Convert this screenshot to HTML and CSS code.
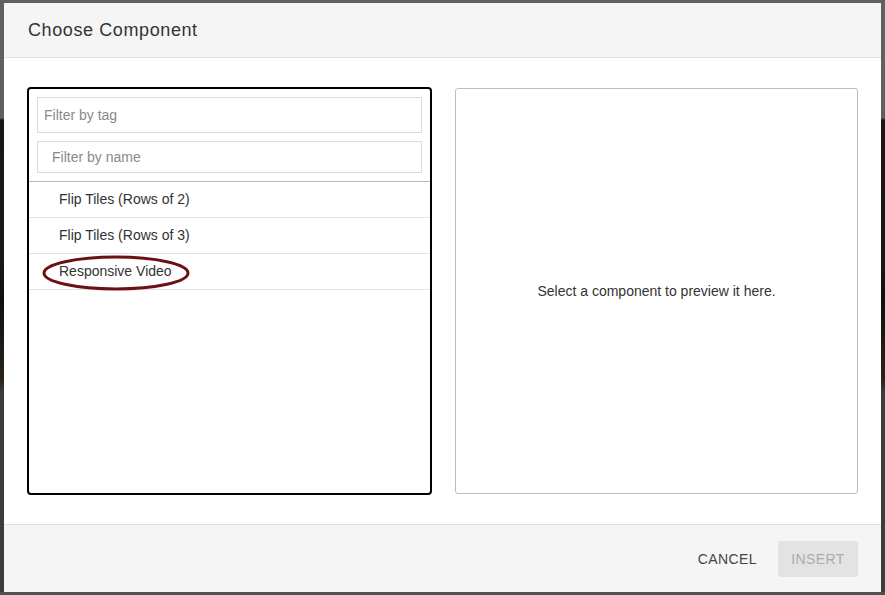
FILE: index.html
```html
<!DOCTYPE html>
<html>
<head>
<meta charset="utf-8">
<link rel="stylesheet" href="styles.css">
</head>
<body>
<div class="backdrop">
  <div class="dialog">
    <div class="dialog-header">
      <h1 class="dialog-title">Choose Component</h1>
    </div>
    <div class="dialog-body">
      <div class="panel panel-list">
        <input class="filter filter-tag" type="text" placeholder="Filter by tag">
        <input class="filter filter-name" type="text" placeholder="Filter by name">
        <ul class="component-list">
          <li class="component-item">Flip Tiles (Rows of 2)</li>
          <li class="component-item">Flip Tiles (Rows of 3)</li>
          <li class="component-item marked">Responsive Video
            <svg class="mark" width="150" height="38" viewBox="0 0 150 38"><ellipse cx="75" cy="19" rx="72" ry="16" fill="none" stroke="#6b1013" stroke-width="3"/></svg>
          </li>
        </ul>
      </div>
      <div class="panel panel-preview">
        <p class="preview-msg">Select a component to preview it here.</p>
      </div>
    </div>
    <div class="dialog-footer">
      <button class="btn btn-cancel">Cancel</button>
      <button class="btn btn-insert" disabled>Insert</button>
    </div>
  </div>
</div>
</body>
</html>
```
FILE: styles.css
```css
* { box-sizing: border-box; }
html, body {
  margin: 0;
  padding: 0;
  width: 885px;
  height: 595px;
  overflow: hidden;
}
body {
  font-family: "Liberation Sans", Arial, sans-serif;
  background: linear-gradient(to bottom,
    #606060 0, #606060 118px,
    #1c1517 120px, #18181c 260px, #0f100c 300px, #2a231d 380px,
    #3c3c3c 392px, #3c3c3c 592px, #505050 592px);
}
.backdrop {
  padding: 3px 4px 3px 4px;
}
.dialog {
  width: 877px;
  height: 589px;
  background: #fff;
  display: flex;
  flex-direction: column;
}
.dialog-header {
  height: 55px;
  background: #f5f5f5;
  border-bottom: 1px solid #e0e0e0;
  padding: 0 24px;
  display: flex;
  align-items: center;
}
.dialog-title {
  margin: 0;
  padding-top: 1px;
  font-size: 18px;
  font-weight: normal;
  letter-spacing: 0.6px;
  color: #333;
}
.dialog-body {
  flex: 1;
  display: grid;
  grid-template-columns: 405px 1fr;
  gap: 23px;
  padding: 30px 23px 30px 23px;
}
.panel {
  border: 1px solid #bdbdbd;
  border-radius: 3px;
  background: #fff;
}
.panel-list {
  border: 2px solid #000;
  border-radius: 4px;
  margin: -1px 0 -1px 0;
  display: flex;
  flex-direction: column;
}
.filter {
  display: block;
  margin: 8px 8px 0 8px;
  border: 1px solid #dcdcdc;
  font-family: "Liberation Sans", Arial, sans-serif;
  font-size: 14px;
  color: #333;
  outline: none;
}
.filter::placeholder { color: #8a8a8a; }
.filter-tag {
  height: 36px;
  padding: 0 6px;
}
.filter-name {
  height: 32px;
  padding: 0 14px;
}
.component-list {
  list-style: none;
  margin: 8px 0 0 0;
  padding: 0;
  border-top: 1px solid #b8b8b8;
}
.component-item {
  position: relative;
  height: 36px;
  line-height: 35px;
  padding-left: 30px;
  border-bottom: 1px solid #e3e3e3;
  font-size: 14px;
  color: #333;
}
.mark {
  position: absolute;
  left: 12px;
  top: 0px;
}
.panel-preview {
  display: flex;
  align-items: center;
  justify-content: center;
}
.preview-msg {
  margin: 0;
  font-size: 14px;
  color: #333;
  padding-top: 0;
}
.dialog-footer {
  height: 68px;
  background: #f5f5f5;
  border-top: 1px solid #e0e0e0;
  display: flex;
  align-items: center;
  justify-content: flex-end;
  padding: 0 23px 0 0;
  gap: 13px;
}
.btn {
  font-family: "Liberation Sans", Arial, sans-serif;
  font-size: 14px;
  letter-spacing: 0.4px;
  text-transform: uppercase;
  border: none;
  border-radius: 2px;
  height: 36px;
  cursor: pointer;
}
.btn-cancel {
  background: transparent;
  color: #444;
  padding: 0 8px;
}
.btn-insert {
  width: 80px;
  background: #e3e3e3;
  color: #ababab;
  padding: 0;
}
```
